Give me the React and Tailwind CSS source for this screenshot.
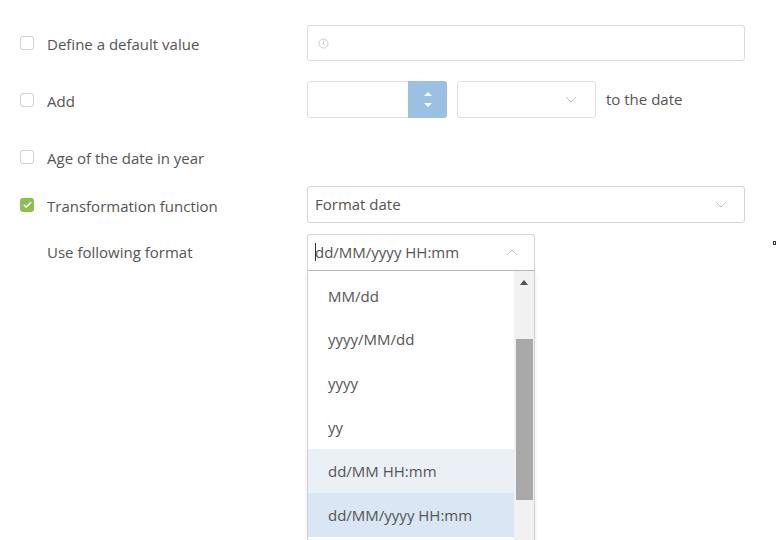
import React from "react";

const font = { fontFamily: '"Open Sans", "Noto Sans", sans-serif' };

function Box({ checked }) {
  if (checked) {
    return (
      <div className="w-[14px] h-[14px] rounded-[3px] bg-[#8cc152] flex items-center justify-center">
        <svg width="9" height="8" viewBox="0 0 9 8">
          <path d="M1.3 4.2 L3.4 6.1 L7.7 1.6" fill="none" stroke="#fff" strokeWidth="1.5" strokeLinecap="round" strokeLinejoin="round" />
        </svg>
      </div>
    );
  }
  return <div className="w-[14px] h-[14px] rounded-[3px] border border-[#d0d0d0] bg-white" />;
}

function Chevron({ up }) {
  return (
    <svg width="12" height="7" viewBox="0 0 12 7">
      <path d={up ? "M1 6 L6 1 L11 6" : "M1 1 L6 6 L11 1"} fill="none" stroke="#c4c4c4" strokeWidth="1" />
    </svg>
  );
}

function Label({ checked, children }) {
  return (
    <div className="w-[307px] flex items-center pl-[20px]">
      <div className="w-[27px]">
        <Box checked={checked} />
      </div>
      <span className="text-[15px] text-[#555] mt-[3px]">{children}</span>
    </div>
  );
}

const items = ["MM/dd", "yyyy/MM/dd", "yyyy", "yy", "dd/MM HH:mm", "dd/MM/yyyy HH:mm"];

export default function App() {
  return (
    <div className="w-[776px] h-[540px] bg-white overflow-hidden relative" style={font}>
      <div className="flex flex-col pt-[25px]">
        <div className="flex h-[36px]">
          <Label>Define a default value</Label>
          <div className="w-[438px] h-[36px] border border-[#dcdcdc] rounded-[3px] flex items-center pl-[10px]">
            <svg width="11" height="11" viewBox="0 0 11 11">
              <circle cx="5.5" cy="5.5" r="4.5" fill="none" stroke="#cfcfcf" strokeWidth="1" />
              <path d="M5.5 3 V5.8 H4" fill="none" stroke="#cfcfcf" strokeWidth="1" />
            </svg>
          </div>
        </div>
        <div className="flex h-[37px] mt-[20px]">
          <Label>Add</Label>
          <div className="flex items-center">
            <div className="w-[140px] h-[37px] border border-[#e0e0e0] rounded-[3px] flex justify-end">
              <div className="w-[39px] h-[37px] -mt-px -mr-px bg-[#9ac1e2] rounded-r-[3px] flex flex-col items-center justify-center gap-[7px]">
                <div className="w-0 h-0 border-l-[4px] border-r-[4px] border-b-[4px] border-l-transparent border-r-transparent border-b-white" />
                <div className="w-0 h-0 border-l-[4px] border-r-[4px] border-t-[4px] border-l-transparent border-r-transparent border-t-white" />
              </div>
            </div>
            <div className="ml-[10px] w-[139px] h-[37px] border border-[#e0e0e0] rounded-[3px] flex items-center justify-end pr-[18px]">
              <Chevron />
            </div>
            <span className="ml-[10px] text-[15px] text-[#555]">to the date</span>
          </div>
        </div>
        <div className="flex h-[36px] mt-[21px]">
          <Label>Age of the date in year</Label>
        </div>
        <div className="flex h-[37px] mt-[11px]">
          <Label checked>Transformation function</Label>
          <div className="w-[438px] h-[37px] border border-[#d4d4d4] rounded-[3px] flex items-center justify-between pl-[7px] pr-[17px]">
            <span className="text-[15px] text-[#555]">Format date</span>
            <Chevron />
          </div>
        </div>
        <div className="flex h-[37px] mt-[11px]">
          <div className="w-[307px] flex pl-[47px] pt-[7px]">
            <span className="text-[15px] text-[#555]">Use following format</span>
          </div>
          <div className="relative">
            <div className="w-[228px] h-[37px] border border-[#d4d4d4] border-b-[#b8b8b8] rounded-t-[3px] flex items-center justify-between pl-[7px] pr-[16px]">
              <span className="text-[15px] text-[#555] relative">
                <span className="absolute left-0 top-[2px] w-px h-[18px] bg-[#333]" />
                dd/MM/yyyy HH:mm
              </span>
              <Chevron up />
            </div>
            <div className="absolute left-0 top-[37px] w-[228px] h-[280px] border-x border-[#d0d0d0] bg-white flex shadow-[0_2px_4px_rgba(0,0,0,0.1)]">
              <div className="flex-1 flex flex-col pt-[3px]">
                {items.map((t, i) => (
                  <div
                    key={t}
                    className={
                      "h-[43.8px] shrink-0 flex items-center pl-[20px] text-[15px] text-[#555] " +
                      (i === 4 ? "bg-[#ebf0f7]" : i === 5 ? "bg-[#dae6f3]" : "")
                    }
                  >
                    {t}
                  </div>
                ))}
              </div>
              <div className="w-[20px] bg-[#f1f1f1] flex flex-col items-center">
                <div className="mt-[9px] w-0 h-0 border-l-[4px] border-r-[4px] border-b-[5px] border-l-transparent border-r-transparent border-b-[#505050]" />
                <div className="mt-[54px] w-[17px] h-[161px] bg-[#a8a8a8]" />
              </div>
            </div>
          </div>
        </div>
      </div>
      <div className="absolute left-[773px] top-[241px] w-[3px] h-[4px] border border-[#333]" />
    </div>
  );
}
